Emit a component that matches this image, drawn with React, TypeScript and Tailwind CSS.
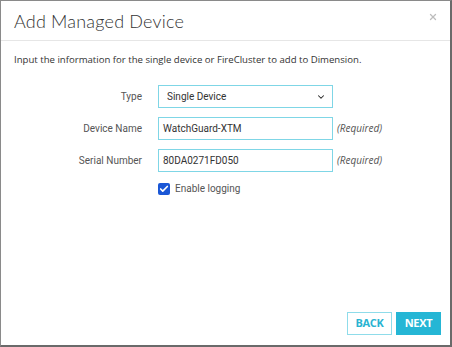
import { Check, ChevronDown, X } from "lucide-react";

const labelCls = "text-right text-[10px] text-[#555] pr-[16px]";
const inputCls =
  "h-[23px] w-[175px] border border-[#7fd6e6] bg-white px-[4px] text-[10px] text-[#333] flex items-center";

export default function App() {
  return (
    <div
      className="w-[452px] h-[347px] bg-white border-l border-t border-[#8a8a8a] border-r-2 border-b-2 border-r-[#6a6a6a] border-b-[#6a6a6a] flex flex-col"
      style={{ fontFamily: "Roboto, 'Liberation Sans', sans-serif" }}
    >
      <div className="h-[40px] shrink-0 border-b border-[#e6e6e6] flex items-center justify-between pl-[13px] pr-[12px]">
        <h1
          className="text-[18px] font-light text-[#333] tracking-[0.2px] pt-[1px]"
          style={{ fontFamily: "Lato, 'Open Sans', sans-serif" }}
        >
          Add Managed Device
        </h1>
        <X size={10} strokeWidth={3} className="text-[#bdbdbd] -mt-[8px]" />
      </div>

      <p
        className="pl-[13px] pt-[12px] text-[9.6px] text-[#333]"
        style={{ fontFamily: "'Open Sans', sans-serif" }}
      >
        Input the information for the single device or FireCluster to add to Dimension.
      </p>

      <div className="mt-[18px] grid grid-cols-[157px_175px_auto] gap-y-[9px] items-center">
        <div className={labelCls}>Type</div>
        <div className={inputCls + " justify-between pl-[8px] pr-[6px]"}>
          <span>Single Device</span>
          <ChevronDown size={10} strokeWidth={2.5} className="text-[#222]" />
        </div>
        <div />

        <div className={labelCls}>Device Name</div>
        <div className={inputCls}>WatchGuard-XTM</div>
        <div
          className="pl-[4px] text-[10px] italic text-[#555]"
          style={{ fontFamily: "'Open Sans', sans-serif" }}
        >
          (Required)
        </div>

        <div className={labelCls}>Serial Number</div>
        <div className={inputCls}>80DA0271FD050</div>
        <div
          className="pl-[4px] text-[10px] italic text-[#555]"
          style={{ fontFamily: "'Open Sans', sans-serif" }}
        >
          (Required)
        </div>

        <div />
        <div className="flex items-center gap-[5px]">
          <span className="w-[12px] h-[12px] rounded-[2px] bg-[#1a57d6] flex items-center justify-center">
            <Check size={10} strokeWidth={4} className="text-white" />
          </span>
          <span className="text-[10px] text-[#555]">Enable logging</span>
        </div>
        <div />
      </div>

      <div className="mt-auto mb-[10px] flex justify-end gap-[4px] pr-[9px]">
        <button
          className="h-[23px] w-[45px] border border-[#8fdcea] bg-white text-[11px] font-bold text-[#29b3d1] tracking-[-0.3px]"
          style={{ fontFamily: "'Open Sans', sans-serif" }}
        >
          BACK
        </button>
        <button
          className="h-[23px] w-[45px] bg-[#25b6d5] text-[11px] font-bold text-white tracking-[-0.3px]"
          style={{ fontFamily: "'Open Sans', sans-serif" }}
        >
          NEXT
        </button>
      </div>
    </div>
  );
}
